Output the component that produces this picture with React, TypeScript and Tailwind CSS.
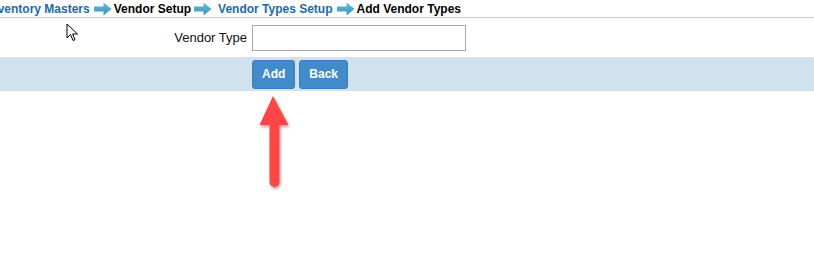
import React from 'react'

const crumbs = [
  { label: 'Inventory Masters', link: true },
  { label: 'Vendor Setup', link: false },
  { label: 'Vendor Types Setup', link: true },
  { label: 'Add Vendor Types', link: false },
]

function CrumbArrow({ wide }: { wide?: boolean }) {
  return (
    <svg
      width="18"
      height="14"
      viewBox="0 0 18 14"
      className={wide ? 'ml-[3px] mr-[6px] shrink-0' : 'ml-[4px] mr-[2px] shrink-0'}
    >
      <defs>
        <linearGradient id="ca" x1="0" y1="0" x2="0" y2="1">
          <stop offset="0" stopColor="#6bbad8" />
          <stop offset="1" stopColor="#3594bd" />
        </linearGradient>
      </defs>
      <path d="M0 4.5 H9.5 V0.5 L17.5 7 L9.5 13.5 V9.5 H0 Z" fill="url(#ca)" />
    </svg>
  )
}

export default function App() {
  return (
    <div
      className="relative w-[814px] h-[260px] bg-white overflow-hidden"
      style={{ fontFamily: '"Liberation Sans", Arial, sans-serif' }}
    >
      {/* breadcrumb */}
      <div className="h-[18px] border-b border-[#c8c8c8] flex items-center -ml-[13px] text-[12px] font-bold leading-none">
        {crumbs.map((c, i) => (
          <React.Fragment key={c.label}>
            {i > 0 && <CrumbArrow wide={i === 2} />}
            <span className={c.link ? 'text-[#1b6aa6]' : 'text-black'}>{c.label}</span>
          </React.Fragment>
        ))}
      </div>

      {/* form row */}
      <div className="flex items-center h-[39px]">
        <label className="w-[248px] text-right pr-[1px] text-[13px] text-[#111]">Vendor Type</label>
        <input
          type="text"
          className="ml-[4px] w-[214px] h-[26px] border border-[#a9a9a9] bg-white outline-none"
        />
      </div>

      {/* action band */}
      <div className="bg-[#d1e1ed] h-[34px] flex items-center pl-[252px] gap-[4px]">
        <button className="h-[29px] px-[9px] bg-[#428bca] border border-[#3a7fbd] rounded-[3px] text-white text-[12px] font-bold">
          Add
        </button>
        <button className="h-[29px] px-[9px] bg-[#428bca] border border-[#3a7fbd] rounded-[3px] text-white text-[12px] font-bold">
          Back
        </button>
      </div>

      {/* mouse cursor */}
      <svg width="14" height="20" viewBox="0 0 14 20" className="absolute left-[66px] top-[23px]">
        <path d="M1 1 V15 L4.5 11.5 L7 17.5 L9 16.6 L6.6 11 H11.5 Z" fill="white" stroke="black" strokeWidth="1" />
      </svg>

      {/* red annotation arrow */}
      <svg width="40" height="100" viewBox="0 0 40 100" className="absolute left-[255px] top-[94px]">
        <defs>
          <filter id="sh" x="-50%" y="-20%" width="200%" height="140%">
            <feDropShadow dx="1" dy="2" stdDeviation="1.5" floodColor="#000" floodOpacity="0.35" />
          </filter>
        </defs>
        <g filter="url(#sh)">
          <path d="M18 2 L33.5 31 H24.5 V88 a5 5 0 0 1 -10 0 V31 H4.5 Z" fill="#ff4444" />
        </g>
      </svg>
    </div>
  )
}
